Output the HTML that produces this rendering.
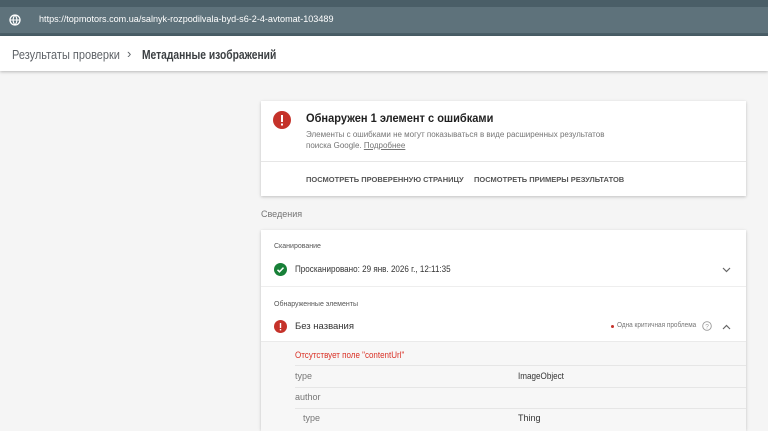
<!DOCTYPE html>
<html><head><meta charset="utf-8"><style>
*{margin:0;padding:0;box-sizing:border-box}
body{width:768px;height:422px;overflow:hidden;background:#f5f5f5;font-family:"Liberation Sans","Noto Sans CJK SC",sans-serif;position:relative;color:#212121}
.a{position:absolute;white-space:nowrap;transform-origin:0 50%}
#top{position:absolute;left:0;top:0;width:768px;height:36px;background:#4a5e67}
#strip{position:absolute;left:0;top:7px;width:768px;height:26px;background:#5e727b}
#hdr{position:absolute;left:0;top:36px;width:768px;height:35px;background:#fff;box-shadow:0 1px 3px rgba(0,0,0,.25)}
.card{position:absolute;left:261px;width:485px;background:#fff;box-shadow:0 1px 3px rgba(0,0,0,.22)}
.ln{position:absolute;height:1px;background:#e6e6e6}
</style></head><body>
<div id="top"></div><div id="strip"></div>
<svg class="a" style="left:9px;top:14px" width="12" height="12" viewBox="0 0 12 12"><circle cx="6" cy="6" r="5" fill="none" stroke="#fff" stroke-width="1.3"/><path d="M1 6h10M6 1c-2.5 3-2.5 7 0 10M6 1c2.5 3 2.5 7 0 10" fill="none" stroke="#fff" stroke-width="1.1"/></svg>
<div class="a" style="left:39px;top:14px;font-size:9.5px;color:#fff;transform:scaleX(.955)">https://topmotors.com.ua/salnyk-rozpodilvala-byd-s6-2-4-avtomat-103489</div>
<div id="hdr"></div>
<div class="a" style="left:12px;top:47px;font-size:13px;color:#5f6368;transform:scaleX(.845)">Результаты проверки</div>
<div class="a" style="left:127px;top:46px;font-size:13px;color:#5f6368">›</div>
<div class="a" style="left:142px;top:47px;font-size:13px;color:#3c4043;font-weight:bold;transform:scaleX(.79)">Метаданные изображений</div>

<div class="card" style="top:101px;height:95px">
<svg class="a" style="left:12px;top:10px" width="18" height="18"><circle cx="9" cy="9" r="9" fill="#c5322a"/><rect x="8" y="4" width="2" height="7" fill="#fff"/><rect x="8" y="12.5" width="2" height="2" fill="#fff"/></svg>
<div class="a" style="left:45px;top:10px;font-size:12px;font-weight:bold;transform:scaleX(.92)">Обнаружен 1 элемент с ошибками</div>
<div class="a" style="left:45px;top:28px;font-size:8px;color:#757575;line-height:11px">Элементы с ошибками не могут показываться в виде расширенных результатов<br>поиска Google. <u>Подробнее</u></div>
<div class="ln" style="left:0;top:60px;width:485px"></div>
<div class="a" style="left:45px;top:74px;font-size:7.5px;font-weight:bold;color:#555">ПОСМОТРЕТЬ ПРОВЕРЕННУЮ СТРАНИЦУ</div>
<div class="a" style="left:213px;top:74px;font-size:7.5px;font-weight:bold;color:#555">ПОСМОТРЕТЬ ПРИМЕРЫ РЕЗУЛЬТАТОВ</div>
</div>
<div class="a" style="left:261px;top:209px;font-size:9px;color:#757575">Сведения</div>

<div class="card" style="top:230px;height:200px">
<div class="a" style="left:13px;top:13px;font-size:7px;color:#555">Сканирование</div>
<svg class="a" style="left:13px;top:33px" width="13" height="13"><circle cx="6.5" cy="6.5" r="6.5" fill="#188038"/><path d="M3.5 6.8l2 2 4-4.2" fill="none" stroke="#fff" stroke-width="1.5"/></svg>
<div class="a" style="left:34px;top:34px;font-size:9.5px;color:#333;transform:scaleX(.85)">Просканировано: 29 янв. 2026 г., 12:11:35</div>
<svg class="a" style="left:461px;top:37px" width="9" height="6"><path d="M1 1l3.5 3.5L8 1" fill="none" stroke="#666" stroke-width="1.2"/></svg>
<div class="ln" style="left:0;top:56px;width:485px;background:#eee"></div>
<div class="a" style="left:13px;top:71px;font-size:7px;color:#555">Обнаруженные элементы</div>
<svg class="a" style="left:13px;top:90px" width="13" height="13"><circle cx="6.5" cy="6.5" r="6.5" fill="#c5322a"/><rect x="5.8" y="3" width="1.4" height="5" fill="#fff"/><rect x="5.8" y="9" width="1.4" height="1.4" fill="#fff"/></svg>
<div class="a" style="left:34px;top:91px;font-size:9.5px;color:#333">Без названия</div>
<div class="a" style="left:350px;top:95px;width:3px;height:3px;border-radius:50%;background:#c5322a"></div>
<div class="a" style="left:356px;top:92px;font-size:7px;color:#777;transform:scaleX(.92)">Одна критичная проблема</div>
<svg class="a" style="left:441px;top:91px" width="10" height="10"><circle cx="5" cy="5" r="4.3" fill="none" stroke="#999" stroke-width=".9"/><text x="5" y="7.5" font-size="6.5" text-anchor="middle" fill="#999" font-family="Liberation Sans">?</text></svg>
<svg class="a" style="left:461px;top:94px" width="9" height="6"><path d="M1 5l3.5-3.5L8 5" fill="none" stroke="#666" stroke-width="1.2"/></svg>
<div class="a" style="left:0;top:111px;width:485px;height:90px;background:#f7f7f7;border-top:1px solid #eaeaea"></div>
<div class="a" style="left:34px;top:120px;font-size:9px;color:#d93025;transform:scaleX(.89)">Отсутствует поле "contentUrl"</div>
<div class="ln" style="left:34px;top:135px;width:451px;background:#e6e6e6"></div>
<div class="a" style="left:34px;top:141px;font-size:9px;color:#777">type</div>
<div class="a" style="left:257px;top:141px;font-size:9px;color:#333;transform:scaleX(.9)">ImageObject</div>
<div class="ln" style="left:34px;top:157px;width:451px"></div>
<div class="a" style="left:34px;top:162px;font-size:9px;color:#777">author</div>
<div class="ln" style="left:34px;top:178px;width:451px"></div>
<div class="a" style="left:42px;top:183px;font-size:9px;color:#777">type</div>
<div class="a" style="left:257px;top:183px;font-size:9px;color:#333">Thing</div>
</div>
</body></html>
